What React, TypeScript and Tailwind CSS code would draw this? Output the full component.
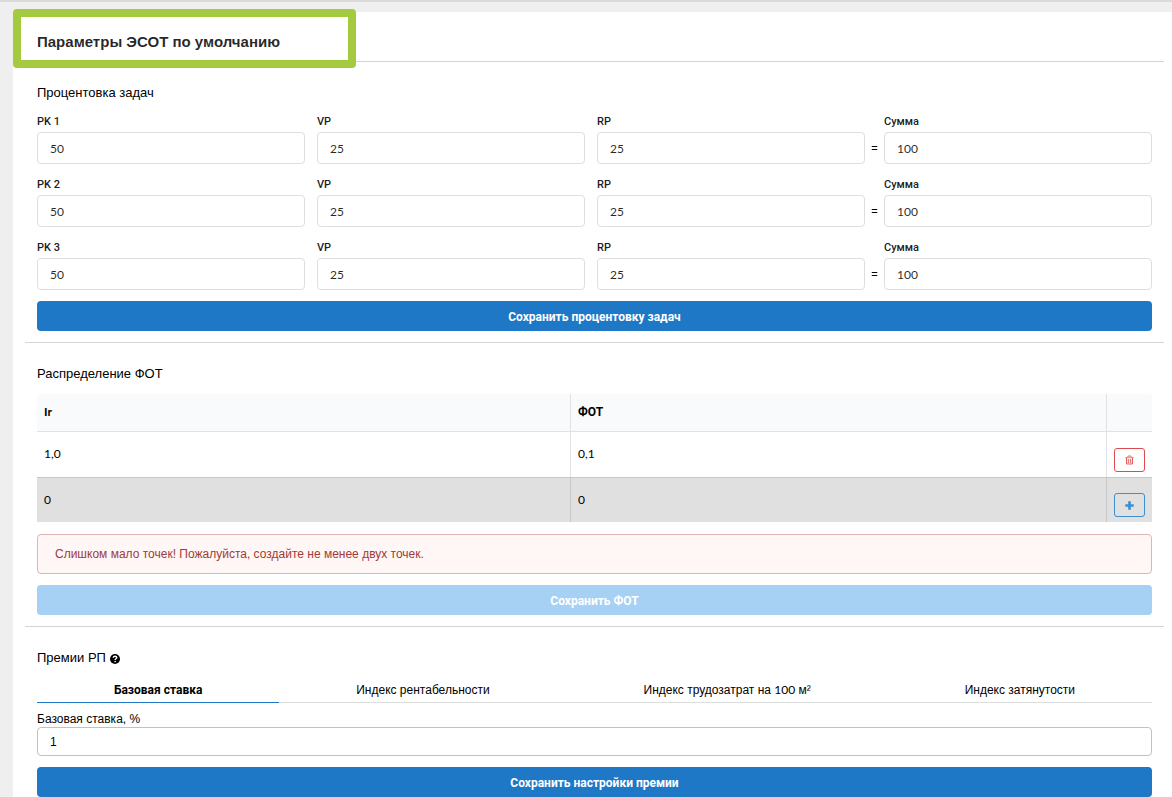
import { useState } from 'react'

type Row = { id: string; values: string[] }

const initialRows: Row[] = [
  { id: 'PK 1', values: ['50', '25', '25'] },
  { id: 'PK 2', values: ['50', '25', '25'] },
  { id: 'PK 3', values: ['50', '25', '25'] },
]

const tabs = [
  { id: 'base', title: 'Базовая ставка' },
  { id: 'profit', title: 'Индекс рентабельности' },
  { id: 'labor', title: <>Индекс трудозатрат на <span className="font-['Lato',sans-serif]">100</span> м²</> },
  { id: 'delay', title: 'Индекс затянутости' },
]

function Field({ id, label, value, onChange }: {
  id: string
  label: string
  value: string
  onChange?: (v: string) => void
}) {
  return (
    <div className="flex-1 min-w-0">
      <label htmlFor={id} className="block h-[18px] font-['Roboto',sans-serif] text-[11px] leading-4 font-medium text-black/90">{label}</label>
      <input
        id={id}
        type="text"
        value={value}
        readOnly={!onChange}
        onChange={e => onChange?.(e.target.value)}
        className="block w-full h-8 px-3 border border-[#dededf] rounded bg-white font-['Lato',sans-serif] text-[12px] text-black/85 focus:outline-none focus:border-[#85b7d9]"
      />
    </div>
  )
}

function SaveButton({ children, disabled }: { children: string; disabled?: boolean }) {
  return (
    <button
      type="button"
      disabled={disabled}
      className="block w-full h-[30px] pt-0.5 rounded bg-[#1e78c6] hover:bg-[#1a69ae] font-['Roboto',sans-serif] text-[12px] font-bold text-white disabled:bg-[#a6d1f5]"
    >
      {children}
    </button>
  )
}

function TrashIcon() {
  return (
    <svg className="w-[9px] h-[10px]" viewBox="0 0 9 10" fill="none" stroke="currentColor">
      <path d="M0.5 2.5h8M2.5 2.5L3.2 1h2.6l.7 1.5" />
      <path d="M1.5 2.5v6.5h6V2.5" fill="#fbe3e3" />
      <path d="M3.5 4v4M5.5 4v4" strokeWidth="0.8" />
    </svg>
  )
}

function PlusIcon() {
  return (
    <svg className="w-[9px] h-[9px]" viewBox="0 0 9 9" fill="currentColor">
      <path d="M3.2 0.3h2.6v2.9h2.9v2.6H5.8v2.9H3.2V5.8H0.3V3.2h2.9z" />
    </svg>
  )
}

function HelpIcon() {
  return (
    <svg className="w-[10px] h-[10px]" viewBox="0 0 10 10">
      <circle cx="5" cy="5" r="5" fill="black" />
      <path d="M3.2 3.8C3.3 2.7 4 2.3 5 2.3s1.8.6 1.8 1.4C6.8 4.8 5.1 4.8 5.1 6" fill="none" stroke="white" strokeWidth="1.4" />
      <circle cx="5.1" cy="7.6" r="0.8" fill="white" />
    </svg>
  )
}

export default function App() {
  const [rows, setRows] = useState(initialRows)
  const [activeTab, setActiveTab] = useState('base')
  const [rate, setRate] = useState('1')

  function updateValue(row: number, col: number, v: string) {
    setRows(rs => rs.map((r, i) => (i === row ? { ...r, values: r.values.map((x, j) => (j === col ? v : x)) } : r)))
  }

  return (
    <div className="min-h-screen bg-[#efefef] border-t-2 border-[#dadada] pt-[10px] pl-[13px] font-['Liberation_Sans',Arial,sans-serif] text-black">
      <main className="bg-white pl-3 pr-2">
        <header className="relative h-[50px] px-3 flex items-center pt-3 border-b border-[#d4d4d5]">
          <h1 className="text-[15px] font-bold text-black/85">Параметры ЭСОТ по умолчанию</h1>
          <div className="absolute -left-3 -top-[3px] w-[343px] h-[59px] border-8 border-[#a4ca40] rounded pointer-events-none" />
        </header>

        {/* Процентовка */}
        <section className="px-3 pt-5 pb-[11px] border-b border-[#d4d4d5]">
          <h2 className="h-8 text-[13px] leading-[22px]">Процентовка задач</h2>
          <div className="flex flex-col gap-[13px] mb-[11px]">
            {rows.map((row, i) => (
              <div key={row.id} className="flex">
                <div className="flex flex-[3] gap-3">
                  {['', 'VP', 'RP'].map((label, j) => (
                    <Field
                      key={j}
                      id={`pk-${i}-${j}`}
                      label={label || row.id}
                      value={row.values[j]}
                      onChange={v => updateValue(i, j, v)}
                    />
                  ))}
                </div>
                <span className="w-[19px] pt-[18px] flex items-center justify-center text-[11px]">=</span>
                <div className="flex w-[268px]">
                  <Field id={`sum-${i}`} label="Сумма" value={String(row.values.reduce((s, v) => s + Number(v), 0))} />
                </div>
              </div>
            ))}
          </div>
          <SaveButton>Сохранить процентовку задач</SaveButton>
        </section>

        {/* ФОТ */}
        <section className="px-3 pt-5 pb-[11px] border-b border-[#d4d4d5]">
          <h2 className="h-[31px] text-[13px] leading-[22px]">Распределение ФОТ</h2>
          <table className="w-full table-fixed text-left text-[12px] border-separate border-spacing-0">
            <colgroup>
              <col className="w-[47.8%]" />
              <col />
              <col className="w-[46px]" />
            </colgroup>
            <thead>
              <tr className="h-[38px] bg-[#f9fafb]">
                <th className="px-[7px] pb-0.5 font-['Lato',sans-serif] font-bold border-b border-[#e0e2e3] rounded-tl">Ir</th>
                <th className="px-[7px] pb-0.5 font-['Roboto',sans-serif] font-bold border-b border-l border-[#e0e2e3]">ФОТ</th>
                <th className="border-b border-l border-[#e0e2e3] rounded-tr" />
              </tr>
            </thead>
            <tbody className="font-['Lato',sans-serif]">
              <tr className="h-[45px]">
                <td className="px-[7px] pb-0.5">1,0</td>
                <td className="px-[7px] pb-0.5 border-l border-[#e0e2e3]">0,1</td>
                <td className="pl-[7px] pt-[10px] border-l border-[#e0e2e3]">
                  <button type="button" aria-label="Удалить" className="w-[31px] h-6 flex items-center justify-center border border-[#db4b4b] rounded-[3px] bg-white text-[#e06060]">
                    <TrashIcon />
                  </button>
                </td>
              </tr>
              <tr className="h-[45px] bg-[#e0e0e0]">
                <td className="px-[7px] border-t border-[#c8c8c9]">0</td>
                <td className="px-[7px] border-t border-l border-[#c8c8c9]">0</td>
                <td className="pl-[7px] pt-[10px] border-t border-l border-[#c8c8c9]">
                  <button type="button" aria-label="Добавить" className="w-[31px] h-6 flex items-center justify-center border border-[#3b8fd2] rounded-[3px] text-[#3b8fd2]">
                    <PlusIcon />
                  </button>
                </td>
              </tr>
            </tbody>
          </table>
          <p role="alert" className="mt-3 mb-[11px] h-10 px-[17px] flex items-center border border-[#e0b4b4] rounded bg-[#fff6f6] text-[12px] text-[#9f3a38]">
            Слишком мало точек! Пожалуйста, создайте не менее двух точек.
          </p>
          <SaveButton disabled>Сохранить ФОТ</SaveButton>
        </section>

        {/* Премии */}
        <section className="px-3 pt-5">
          <h2 className="h-7 flex gap-1 text-[13px] leading-[22px]">
            Премии РП
            <span className="pt-[7px]"><HelpIcon /></span>
          </h2>
          <div role="tablist" className="flex border-b border-[#dcdddd]">
            {tabs.map(tab => (
              <button
                key={tab.id}
                type="button"
                role="tab"
                aria-selected={tab.id === activeTab}
                onClick={() => setActiveTab(tab.id)}
                className={`flex-auto h-7 -mb-px pt-0.5 text-[12px] border-b ${tab.id === activeTab ? "font-['Roboto',sans-serif] font-bold border-[#1e78c6]" : 'border-transparent'}`}
              >
                {tab.title}
              </button>
            ))}
          </div>
          <label htmlFor="rate" className="block pt-2 text-[12px] leading-4">Базовая ставка, %</label>
          <input
            id="rate"
            type="text"
            value={rate}
            onChange={e => setRate(e.target.value)}
            className="block w-full h-[29px] px-3 mb-[11px] border border-[#c0c1c2] rounded bg-white text-[12px] focus:outline-none focus:border-[#85b7d9]"
          />
          <SaveButton>Сохранить настройки премии</SaveButton>
        </section>
      </main>
    </div>
  )
}
